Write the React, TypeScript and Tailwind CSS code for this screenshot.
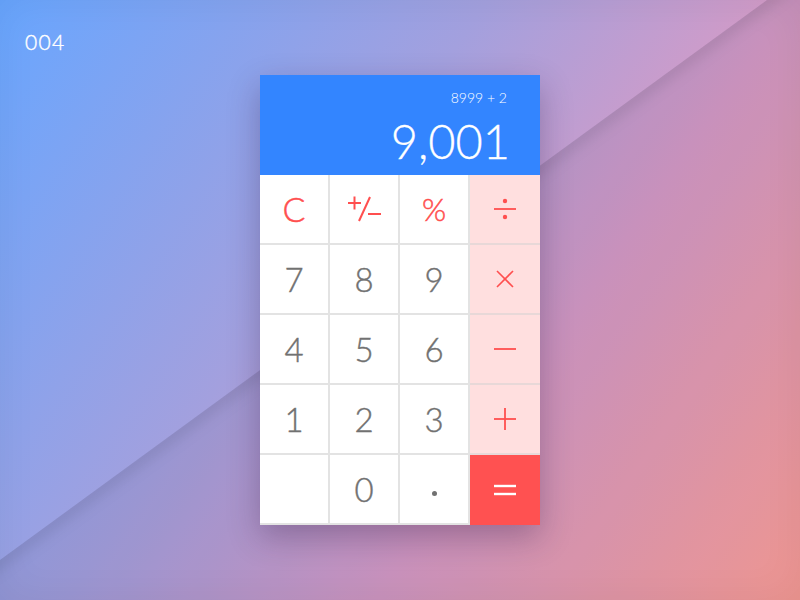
const font = { fontFamily: 'Lato, "Noto Sans", sans-serif' };

const Red = "#ff4f4f";

const Cell = ({
  children,
  className = "",
}: {
  children?: React.ReactNode;
  className?: string;
}) => (
  <div
    className={`w-[70px] h-[70px] flex items-center justify-center border-[#e3e3e3] ${className}`}
  >
    {children}
  </div>
);

const Digit = ({ n }: { n: string }) => (
  <Cell className="bg-white border-r-2 border-b-2">
    <span className="text-[33px] font-light text-[#717171] leading-none [-webkit-text-stroke:0.4px_#717171]">{n}</span>
  </Cell>
);

const Op = ({ children }: { children: React.ReactNode }) => (
  <Cell className="bg-[#ffdfdf] border-b-2 border-[#e8d8d8]">{children}</Cell>
);

const App = () => {
  return (
    <div
      className="relative w-[800px] h-[600px] overflow-hidden bg-[linear-gradient(125deg,#68a6ff_0%,#a3a0de_40%,#d59bc6_65%,#ffa097_100%)] shadow-[inset_0_0_40px_rgba(0,0,0,0.06)] flex items-center justify-center"
      style={font}
    >
      <svg className="absolute inset-0" width="800" height="600" viewBox="0 0 800 600">
        <defs>
          <clipPath id="fold">
            <polygon points="0,560 767,0 800,0 800,600 0,600" />
          </clipPath>
          <filter id="soft" x="-20%" y="-20%" width="140%" height="140%">
            <feGaussianBlur stdDeviation="7" />
          </filter>
        </defs>
        <polygon points="0,560 767,0 800,0 800,600 0,600" fill="#302050" fillOpacity="0.08" />
        <g clipPath="url(#fold)">
          <line x1="-20" y1="575" x2="787" y2="-15" stroke="#000" strokeOpacity="0.1" strokeWidth="14" filter="url(#soft)" />
        </g>
      </svg>

      <div className="absolute left-[25px] top-[26px] text-white text-[21px] font-light tracking-[0.06em] [-webkit-text-stroke:0.4px_#fff]">004</div>

      <div className="relative w-[280px] shadow-[0_12px_30px_rgba(40,20,60,0.3)]">
        <div className="h-[100px] bg-[#3385ff] flex flex-col items-end pr-[30px] pt-[16px] text-white">
          <div className="text-[14px] font-light leading-none pr-[3px]">8999 + 2</div>
          <div className="text-[47px] font-light leading-none mt-[13px] [-webkit-text-stroke:0.3px_#fff]">9,001</div>
        </div>
        <div className="grid grid-cols-4">
          <Cell className="bg-white border-r-2 border-b-2">
            <span className="text-[34px] font-light leading-none [-webkit-text-stroke:0.5px_#ff4f4f]" style={{ color: Red }}>C</span>
          </Cell>
          <Cell className="bg-white border-r-2 border-b-2">
            <svg width="34" height="28" viewBox="0 0 34 28" className="ml-[2px]">
              <line x1="0" y1="8" x2="13" y2="8" stroke={Red} strokeWidth="2" />
              <line x1="6.5" y1="1.5" x2="6.5" y2="14.5" stroke={Red} strokeWidth="2" />
              <line x1="11" y1="26" x2="22" y2="2" stroke={Red} strokeWidth="2" />
              <line x1="20" y1="19" x2="33" y2="19" stroke={Red} strokeWidth="2" />
            </svg>
          </Cell>
          <Cell className="bg-white border-r-2 border-b-2">
            <span className="text-[31px] font-light leading-none [-webkit-text-stroke:0.5px_#ff4f4f]" style={{ color: Red }}>%</span>
          </Cell>
          <Op>
            <svg width="24" height="24" viewBox="0 0 24 24">
              <line x1="1" y1="12" x2="23" y2="12" stroke={Red} strokeWidth="1.8" />
              <circle cx="12" cy="4" r="2.2" fill={Red} />
              <circle cx="12" cy="20" r="2.2" fill={Red} />
            </svg>
          </Op>

          <Digit n="7" />
          <Digit n="8" />
          <Digit n="9" />
          <Op>
            <svg width="20" height="20" viewBox="0 0 20 20">
              <line x1="2" y1="2" x2="18" y2="18" stroke={Red} strokeWidth="1.6" />
              <line x1="18" y1="2" x2="2" y2="18" stroke={Red} strokeWidth="1.6" />
            </svg>
          </Op>

          <Digit n="4" />
          <Digit n="5" />
          <Digit n="6" />
          <Op>
            <svg width="24" height="4" viewBox="0 0 24 4">
              <line x1="1" y1="2" x2="23" y2="2" stroke={Red} strokeWidth="1.8" />
            </svg>
          </Op>

          <Digit n="1" />
          <Digit n="2" />
          <Digit n="3" />
          <Op>
            <svg width="24" height="24" viewBox="0 0 24 24">
              <line x1="1" y1="12" x2="23" y2="12" stroke={Red} strokeWidth="1.8" />
              <line x1="12" y1="1" x2="12" y2="23" stroke={Red} strokeWidth="1.8" />
            </svg>
          </Op>

          <Cell className="bg-white border-r-2 border-b-2" />
          <Digit n="0" />
          <Cell className="bg-white border-r-2 border-b-2">
            <span className="w-[5px] h-[5px] rounded-full bg-[#717171] mt-[8px]" />
          </Cell>
          <Cell className="bg-[#ff5151]">
            <svg width="24" height="12" viewBox="0 0 24 12">
              <line x1="1" y1="2" x2="23" y2="2" stroke="#fff" strokeWidth="2.4" />
              <line x1="1" y1="10" x2="23" y2="10" stroke="#fff" strokeWidth="2.4" />
            </svg>
          </Cell>
        </div>
      </div>
    </div>
  );
};

export default App;
